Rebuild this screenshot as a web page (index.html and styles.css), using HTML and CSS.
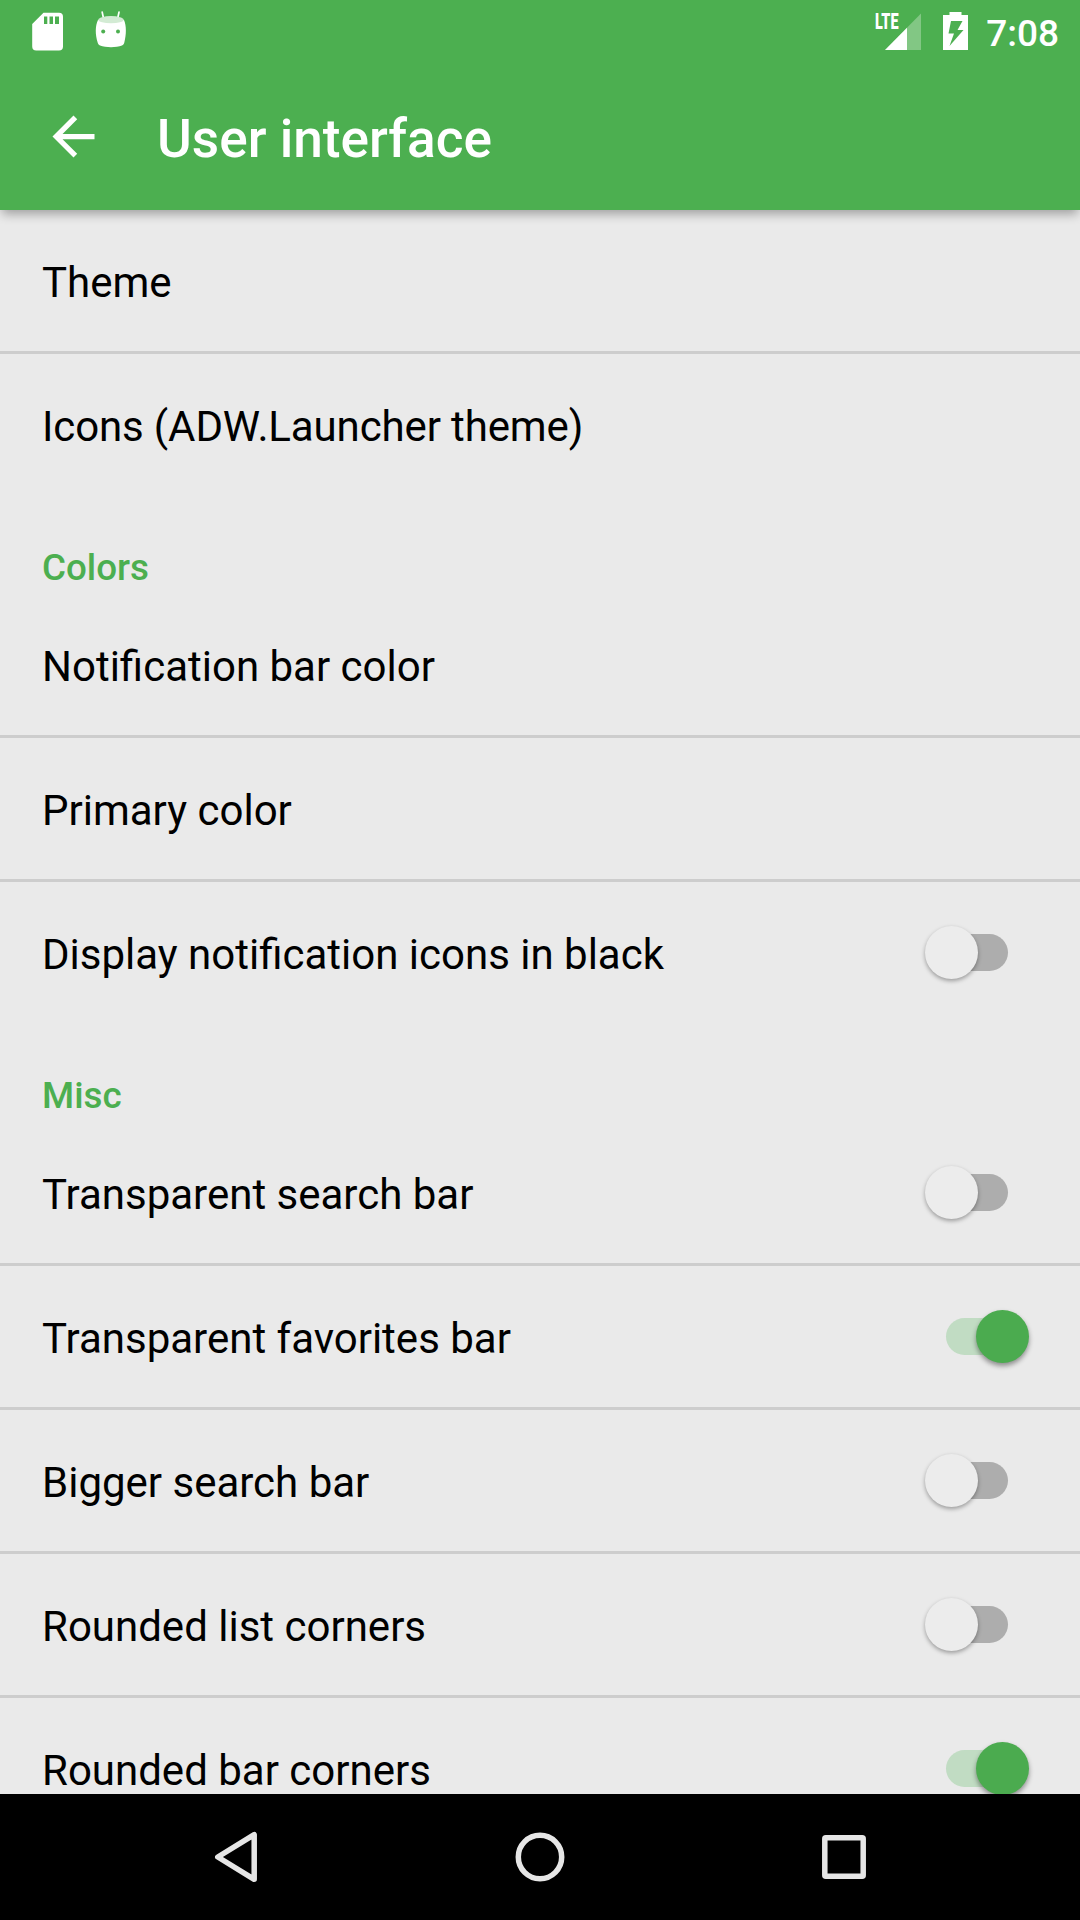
FILE: index.html
```html
<!DOCTYPE html>
<html lang="en">
<head>
<meta charset="utf-8">
<title>User interface</title>
<link rel="stylesheet" href="styles.css">
</head>
<body>
<div class="screen">
  <header class="header">
    <div class="status-bar">
      <svg class="icon-sd" viewBox="0 0 32 40" width="32" height="40"><path fill="#fff" fill-rule="evenodd" d="M11.500 .7H27a4 4 0 0 1 4 4V34.500a4 4 0 0 1-4 4H4.200a4 4 0 0 1-4-4V12ZM12 4.500v7.500h3.300V4.500ZM17.500 4.500v7.500h3.500V4.500ZM23 4.500v7.500h4V4.500Z"/></svg>
      <svg class="icon-droid" viewBox="0 0 32 38" width="32" height="38">
        <path fill="none" stroke="#fff" stroke-width="1.700" stroke-linecap="round" d="M7.200 1.200l1.300 6M24 1.200l-1.300 6"/>
        <path fill="#fff" d="M3 9C.2 14.500 0 23.500 2.800 32c.4 1.300 1 2 2.200 2.400 6 2.300 16 2.300 22 0 1.200-.4 1.800-1.100 2.200-2.400C31.500 23.500 31.500 14.500 29 9Z"/>
        <ellipse cx="16" cy="8.700" rx="12.700" ry="3.600" fill="#d3ebd4"/>
        <circle cx="8.200" cy="20.500" r="2" fill="#4caf50"/><circle cx="23" cy="20.500" r="2" fill="#4caf50"/>
      </svg>
      <div class="network">
        <svg class="icon-signal" viewBox="0 0 36 37" width="36" height="37">
          <path fill="#fff" fill-opacity=".3" d="M36 .5V37H0Z"/>
          <path fill="#fff" d="M22 14.700V37H0Z"/>
        </svg>
        <span class="lte">LTE</span>
      </div>
      <svg class="icon-battery" viewBox="0 0 25 38" width="25" height="38"><path fill="#fff" fill-rule="evenodd" d="M6.500 0h12v3H25v35H0V3h6.500ZM8 9 5.500 21.500H11L6.500 34 20.500 18H14.500l5-9Z"/></svg>
      <span class="clock">7:08</span>
    </div>
    <div class="toolbar">
      <svg viewBox="0 0 24 24" width="63" height="63"><path fill="#fff" d="M20 11H7.830l5.590-5.590L12 4l-8 8 8 8 1.410-1.410L7.830 13H20v-2z"/></svg>
      <h1 class="title">User interface</h1>
    </div>
  </header>
  <main class="list">
    <section class="group">
      <div class="row">Theme</div>
      <div class="row tight">Icons (ADW.Launcher theme)</div>
    </section>
    <h2 class="category">Colors</h2>
    <section class="group">
      <div class="row">Notification bar color</div>
      <div class="row">Primary color</div>
      <div class="row">Display notification icons in black<span class="switch"></span></div>
    </section>
    <h2 class="category">Misc</h2>
    <section class="group">
      <div class="row">Transparent search bar<span class="switch"></span></div>
      <div class="row">Transparent favorites bar<span class="switch on"></span></div>
      <div class="row">Bigger search bar<span class="switch"></span></div>
      <div class="row">Rounded list corners<span class="switch"></span></div>
      <div class="row">Rounded bar corners<span class="switch on"></span></div>
    </section>
  </main>
  <nav class="nav-bar">
    <svg viewBox="0 0 54 54" width="54" height="54"><path d="M45.200 4.700V49.300L8.800 27Z"/></svg>
    <svg viewBox="0 0 54 54" width="54" height="54"><circle cx="27" cy="27" r="21.700"/></svg>
    <svg viewBox="0 0 54 54" width="54" height="54"><rect x="7.800" y="7.800" width="38.400" height="38.400" rx="1"/></svg>
  </nav>
</div>
</body>
</html>
```
FILE: styles.css
```css
* {
  box-sizing: border-box;
}

body {
  margin: 0;
  font-family: Roboto, sans-serif;
  background: #eaeaea;
}

svg {
  display: block;
  flex: none;
}

.screen {
  display: flex;
  flex-direction: column;
  width: 1080px;
  height: 1920px;
  overflow: hidden;
}

.header {
  position: relative;
  z-index: 1;
  flex: none;
  height: 210px;
  background: #4caf50;
  color: #fff;
  box-shadow: 0 6px 10px -2px rgba(0, 0, 0, 0.32);
}

.status-bar {
  display: flex;
  align-items: flex-start;
  height: 63px;
  padding: 12px 21px 0 32px;
}

.icon-droid {
  margin: -1px auto 0 31px;
}

.network {
  position: relative;
  padding: 0.5px 22px 0 9px;
}

/* Network type sits over the top-left of the signal triangle. */
.lte {
  position: absolute;
  left: -1px;
  top: -4px;
  font-size: 22.5px;
  font-weight: 900;
  line-height: 26px;
  transform: scaleX(0.64);
  transform-origin: 0 0;
}

.clock {
  margin-left: 18px;
  font-size: 37px;
  font-weight: 500;
  line-height: 43px;
}

.toolbar {
  display: flex;
  align-items: center;
  height: 147px;
  padding-left: 42px;
}

.title {
  margin: 4px 0 0 52px;
  font-size: 53.2px;
  font-weight: 500;
  line-height: 62px;
}

.list {
  flex: 1;
  min-height: 0;
  overflow: hidden;
}

.row {
  display: flex;
  align-items: center;
  justify-content: space-between;
  height: 141px;
  padding: 5px 51px 0 42px;
  font-size: 42px;
  line-height: 50px;
  color: #000;
}

.row + .row {
  height: 144px;
  border-top: 3px solid #cdcdcd;
}

.row.tight {
  letter-spacing: -0.13px;
}

.category {
  height: 99px;
  margin: 0;
  padding: 51px 42px 0;
  font-size: 36.75px;
  font-weight: 500;
  line-height: 44px;
  color: #4caf50;
}

.switch {
  position: relative;
  display: flex;
  align-items: center;
  width: 103px;
  height: 53px;
  margin-top: -5px;
}

.switch::before {
  content: "";
  width: 62px;
  height: 37px;
  margin-left: 20px;
  border-radius: 19px;
  background: #adadad;
}

.switch::after {
  content: "";
  position: absolute;
  left: -1px;
  top: 0;
  width: 53px;
  height: 53px;
  border-radius: 50%;
  background: #ececec;
  box-shadow: 0 2px 4px rgba(0, 0, 0, 0.34);
}

.switch.on::before {
  background: #c1dcc3;
}

.switch.on::after {
  left: auto;
  right: 0;
  background: #4bab4f;
  box-shadow: 0 3px 5px rgba(0, 0, 0, 0.4);
}

.nav-bar {
  display: grid;
  grid-template-columns: repeat(3, 304px);
  justify-content: center;
  align-items: center;
  justify-items: center;
  flex: none;
  height: 126px;
  background: #000;
}

.nav-bar svg {
  fill: none;
  stroke: #e6e6e6;
  stroke-width: 5.5;
  stroke-linejoin: round;
}
```
